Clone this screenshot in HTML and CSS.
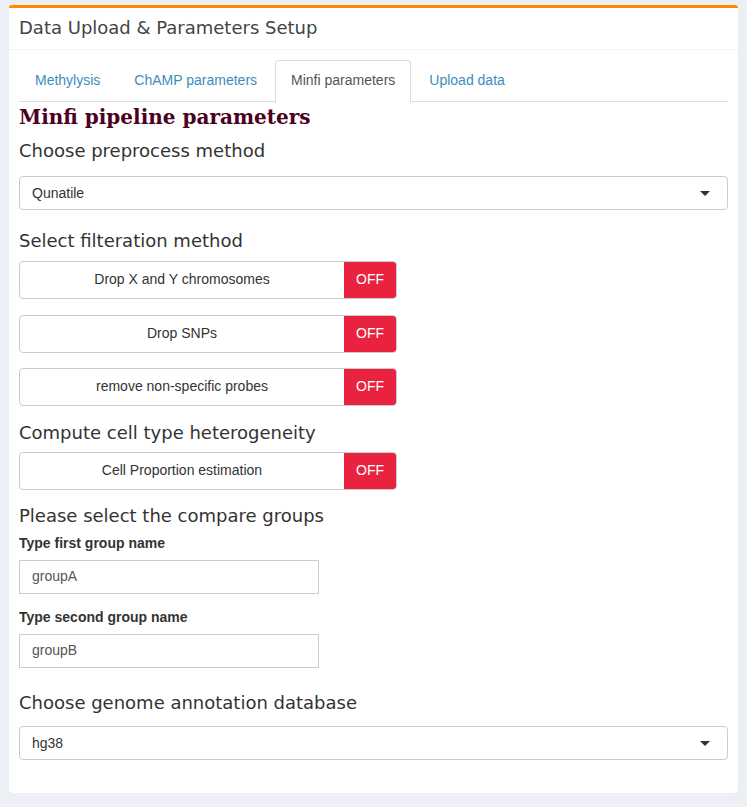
FILE: index.html
```html
<!DOCTYPE html>
<html>
<head>
<meta charset="utf-8">
<link rel="stylesheet" href="styles.css">
</head>
<body>
<div class="card">
  <div class="card-header">Data Upload &amp; Parameters Setup</div>
  <div class="card-body">
    <ul class="tabs">
      <li class="tab">Methylysis</li>
      <li class="tab">ChAMP parameters</li>
      <li class="tab active">Minfi parameters</li>
      <li class="tab">Upload data</li>
    </ul>
    <h2 class="title">Minfi pipeline parameters</h2>
    <h3 class="section">Choose preprocess method</h3>
    <div class="select"><span>Qunatile</span><span class="caret"></span></div>

    <h3 class="section s2">Select filteration method</h3>
    <div class="switch"><span class="sw-label">Drop X and Y chromosomes</span><span class="sw-off">OFF</span></div>
    <div class="switch"><span class="sw-label">Drop SNPs</span><span class="sw-off">OFF</span></div>
    <div class="switch"><span class="sw-label">remove non-specific probes</span><span class="sw-off">OFF</span></div>

    <h3 class="section s3">Compute cell type heterogeneity</h3>
    <div class="switch"><span class="sw-label">Cell Proportion estimation</span><span class="sw-off">OFF</span></div>

    <h3 class="section s5">Please select the compare groups</h3>
    <label class="lbl">Type first group name</label>
    <div class="input">groupA</div>
    <label class="lbl">Type second group name</label>
    <div class="input">groupB</div>

    <h3 class="section s4">Choose genome annotation database</h3>
    <div class="select"><span>hg38</span><span class="caret"></span></div>
  </div>
</div>
</body>
</html>
```

FILE: styles.css
```css
html, body { margin: 0; padding: 0; }
body {
  background: #ecf0f5;
  font-family: "Liberation Sans", Arial, sans-serif;
  font-size: 14px;
  color: #333;
  padding: 5px 9px 0 9px;
}
.card {
  background: #fff;
  border-top: 3px solid #ff8c00;
  border-radius: 3px;
  box-shadow: 0 1px 1px rgba(0,0,0,0.1);
  height: 788px;
  box-sizing: border-box;
}
.card-header {
  font-family: "DejaVu Sans", sans-serif;
  font-size: 18px;
  color: #444;
  padding: 0 10px;
  height: 41px;
  line-height: 40px;
  border-bottom: 1px solid #f4f4f4;
}
.card-body {
  padding: 10px 10px 0 10px;
}
.tabs {
  list-style: none;
  margin: 0;
  padding: 0;
  display: flex;
  border-bottom: 1px solid #ddd;
  height: 41px;
}
.tab {
  padding: 0 15px;
  margin-right: 2px;
  line-height: 38px;
  color: #3c8dbc;
  font-size: 14px;
  border: 1px solid transparent;
  border-radius: 4px 4px 0 0;
  margin-bottom: -1px;
  height: 40px;
}
.tab.active {
  color: #555;
  border-color: #ddd;
  border-bottom-color: #fff;
  background: #fff;
  height: 41px;
}
.title {
  font-family: "DejaVu Serif", serif;
  font-weight: bold;
  font-size: 20px;
  color: #4a0020;
  margin: 3px 0 0 0;
  line-height: 24px;
}
.section {
  font-family: "DejaVu Sans", sans-serif;
  font-weight: normal;
  font-size: 18px;
  color: #333;
  margin: 11px 0 14px 0;
  line-height: 22px;
}
.s2 { margin-top: 20px; margin-bottom: 9px; }
.s3 { margin-top: 6px; margin-bottom: 8px; }
.s5 { margin-top: 8px; margin-bottom: 7px; }
.s4 { margin-top: 24px; margin-bottom: 12px; }
.select {
  height: 34px;
  box-sizing: border-box;
  border: 1px solid #ccc;
  border-radius: 4px;
  display: flex;
  align-items: center;
  justify-content: space-between;
  padding: 0 17px 0 12px;
  font-size: 14px;
  color: #333;
}
.caret {
  width: 0; height: 0;
  border-left: 5px solid transparent;
  border-right: 5px solid transparent;
  border-top: 5px solid #333;
}
.switch {
  width: 378px;
  height: 38px;
  box-sizing: border-box;
  border: 1px solid #ccc;
  border-radius: 4px;
  display: flex;
  overflow: hidden;
  margin-bottom: 15.5px;
}
.sw-label {
  flex: 1;
  text-align: center;
  line-height: 34px;
  color: #333;
}
.sw-off {
  width: 52px;
  background: #e9223f;
  color: #fff;
  text-align: center;
  line-height: 34px;
}
.lbl {
  display: block;
  font-weight: bold;
  font-size: 14px;
  color: #333;
  margin: 0 0 8px 0;
  line-height: 18px;
}
.input {
  width: 300px;
  height: 34px;
  box-sizing: border-box;
  border: 1px solid #ccc;
  padding: 0 12px;
  line-height: 30px;
  color: #555;
  margin-bottom: 14px;
}
```
